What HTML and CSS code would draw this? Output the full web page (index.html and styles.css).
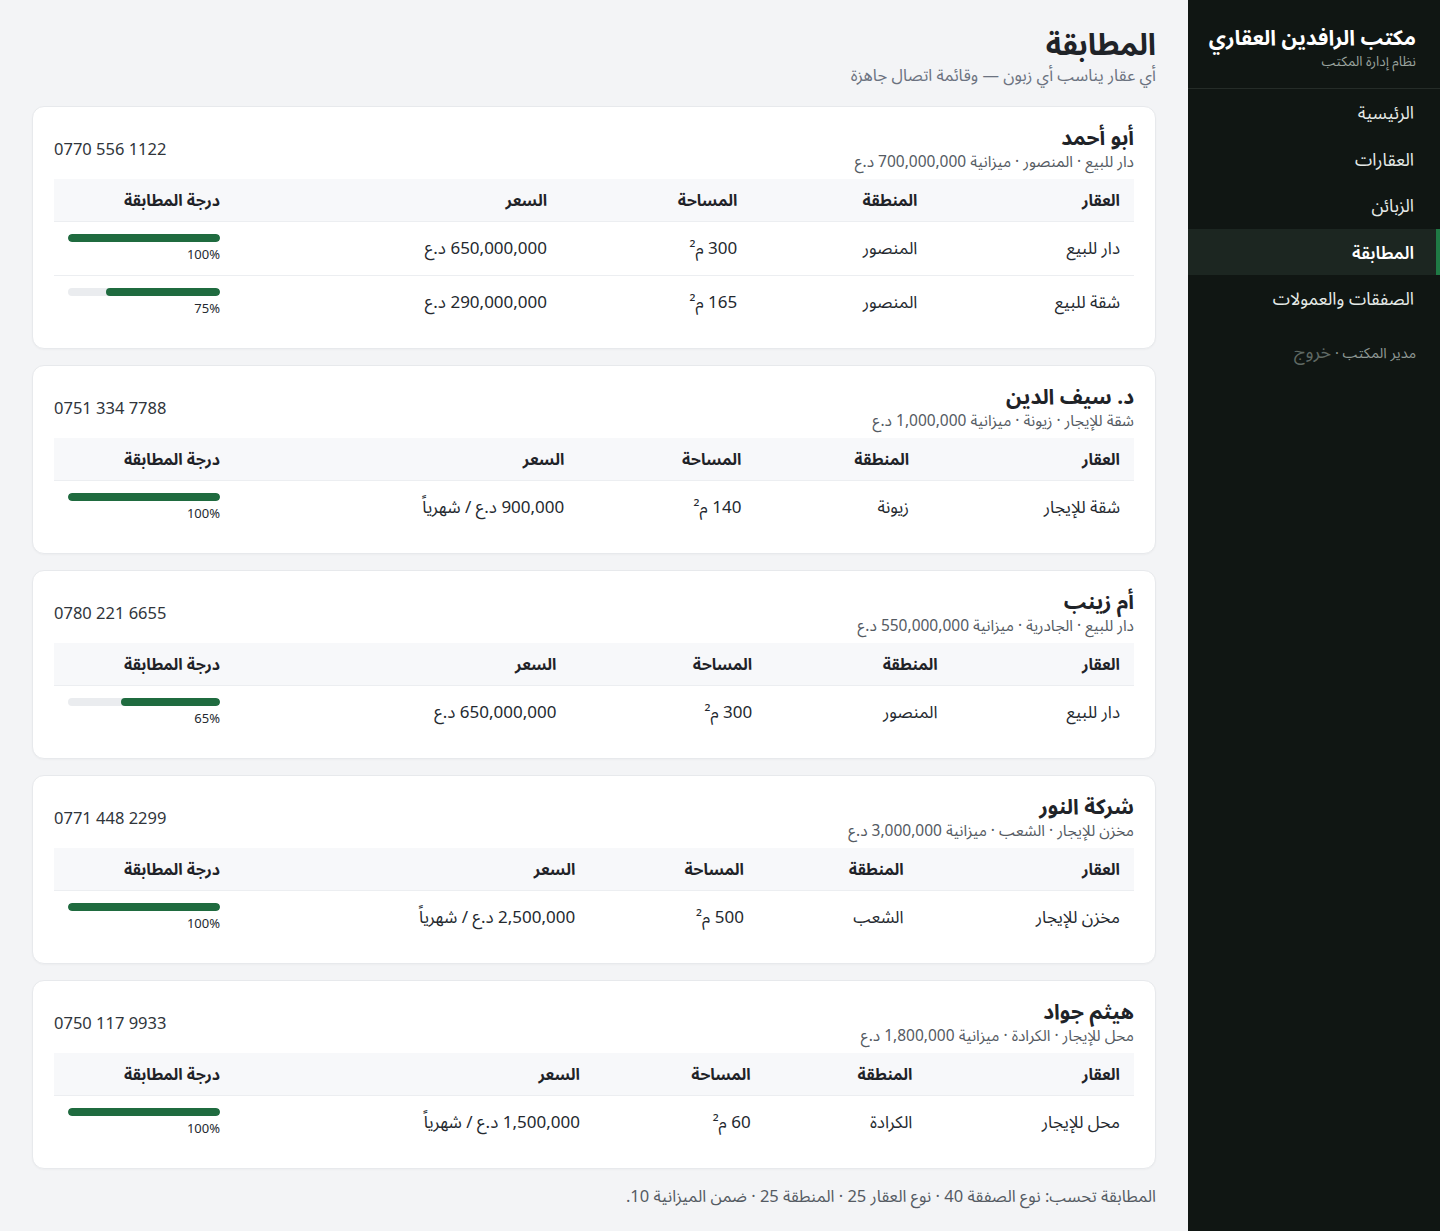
FILE: index.html
```html
<!DOCTYPE html>
<html lang="ar" dir="rtl">
<head>
    <meta charset="UTF-8">
    <meta name="viewport" content="width=device-width, initial-scale=1.0">
    <title>المطابقة</title>
    <link rel="stylesheet" href="styles.css">
</head>
<body>
    <div class="layout">
        <aside class="sidebar">
            <div class="brand">
                <div class="brand-name">مكتب الرافدين العقاري</div>
                <div class="brand-sub">نظام إدارة المكتب</div>
            </div>
            <nav class="nav">
                <a class="nav-item">الرئيسية</a>
                <a class="nav-item">العقارات</a>
                <a class="nav-item">الزبائن</a>
                <a class="nav-item active">المطابقة</a>
                <a class="nav-item">الصفقات والعمولات</a>
            </nav>
            <div class="user">مدير المكتب · <span class="logout">خروج</span></div>
        </aside>

        <main class="main">
            <div class="page-head">
                <h1>المطابقة</h1>
                <div class="page-sub">أي عقار يناسب أي زبون — وقائمة اتصال جاهزة</div>
            </div>

            <div class="card">
                <div class="card-head">
                    <div>
                        <div class="client">أبو أحمد</div>
                        <div class="client-sub">دار للبيع · المنصور · ميزانية 700,000,000 د.ع</div>
                    </div>
                    <div class="phone">0770 556 1122</div>
                </div>
                <table class="matches">
                    <thead>
                        <tr><th>العقار</th><th>المنطقة</th><th>المساحة</th><th>السعر</th><th>درجة المطابقة</th></tr>
                    </thead>
                    <tbody>
                        <tr>
                            <td>دار للبيع</td><td>المنصور</td><td>300 م²</td><td>650,000,000 د.ع</td>
                            <td class="score"><div class="bar"><div class="fill" style="width: 100%"></div></div><div class="pct">100%</div></td>
                        </tr>
                        <tr>
                            <td>شقة للبيع</td><td>المنصور</td><td>165 م²</td><td>290,000,000 د.ع</td>
                            <td class="score"><div class="bar"><div class="fill" style="width: 75%"></div></div><div class="pct">75%</div></td>
                        </tr>
                    </tbody>
                </table>
            </div>

            <div class="card">
                <div class="card-head">
                    <div>
                        <div class="client">د. سيف الدين</div>
                        <div class="client-sub">شقة للإيجار · زيونة · ميزانية 1,000,000 د.ع</div>
                    </div>
                    <div class="phone">0751 334 7788</div>
                </div>
                <table class="matches">
                    <thead>
                        <tr><th>العقار</th><th>المنطقة</th><th>المساحة</th><th>السعر</th><th>درجة المطابقة</th></tr>
                    </thead>
                    <tbody>
                        <tr>
                            <td>شقة للإيجار</td><td>زيونة</td><td>140 م²</td><td>900,000 د.ع / شهرياً</td>
                            <td class="score"><div class="bar"><div class="fill" style="width: 100%"></div></div><div class="pct">100%</div></td>
                        </tr>
                    </tbody>
                </table>
            </div>

            <div class="card">
                <div class="card-head">
                    <div>
                        <div class="client">أم زينب</div>
                        <div class="client-sub">دار للبيع · الجادرية · ميزانية 550,000,000 د.ع</div>
                    </div>
                    <div class="phone">0780 221 6655</div>
                </div>
                <table class="matches">
                    <thead>
                        <tr><th>العقار</th><th>المنطقة</th><th>المساحة</th><th>السعر</th><th>درجة المطابقة</th></tr>
                    </thead>
                    <tbody>
                        <tr>
                            <td>دار للبيع</td><td>المنصور</td><td>300 م²</td><td>650,000,000 د.ع</td>
                            <td class="score"><div class="bar"><div class="fill" style="width: 65%"></div></div><div class="pct">65%</div></td>
                        </tr>
                    </tbody>
                </table>
            </div>

            <div class="card">
                <div class="card-head">
                    <div>
                        <div class="client">شركة النور</div>
                        <div class="client-sub">مخزن للإيجار · الشعب · ميزانية 3,000,000 د.ع</div>
                    </div>
                    <div class="phone">0771 448 2299</div>
                </div>
                <table class="matches">
                    <thead>
                        <tr><th>العقار</th><th>المنطقة</th><th>المساحة</th><th>السعر</th><th>درجة المطابقة</th></tr>
                    </thead>
                    <tbody>
                        <tr>
                            <td>مخزن للإيجار</td><td>الشعب</td><td>500 م²</td><td>2,500,000 د.ع / شهرياً</td>
                            <td class="score"><div class="bar"><div class="fill" style="width: 100%"></div></div><div class="pct">100%</div></td>
                        </tr>
                    </tbody>
                </table>
            </div>

            <div class="card">
                <div class="card-head">
                    <div>
                        <div class="client">هيثم جواد</div>
                        <div class="client-sub">محل للإيجار · الكرادة · ميزانية 1,800,000 د.ع</div>
                    </div>
                    <div class="phone">0750 117 9933</div>
                </div>
                <table class="matches">
                    <thead>
                        <tr><th>العقار</th><th>المنطقة</th><th>المساحة</th><th>السعر</th><th>درجة المطابقة</th></tr>
                    </thead>
                    <tbody>
                        <tr>
                            <td>محل للإيجار</td><td>الكرادة</td><td>60 م²</td><td>1,500,000 د.ع / شهرياً</td>
                            <td class="score"><div class="bar"><div class="fill" style="width: 100%"></div></div><div class="pct">100%</div></td>
                        </tr>
                    </tbody>
                </table>
            </div>

            <p class="note">المطابقة تحسب: نوع الصفقة 40 · نوع العقار 25 · المنطقة 25 · ضمن الميزانية 10.</p>
        </main>
    </div>
</body>
</html>
```

FILE: styles.css
```css
* {
    box-sizing: border-box;
}

body {
    margin: 0;
    font-family: "Noto Sans", "Noto Sans Arabic", "DejaVu Sans", sans-serif;
    background-color: #f3f4f6;
    color: #1f2328;
}

.layout {
    display: flex;
    min-height: 100vh;
}

/* Sidebar */
.sidebar {
    width: 252px;
    flex-shrink: 0;
    background-color: #101613;
    color: #e8ece9;
}

.brand {
    padding: 22px 24px 18px;
    border-bottom: 1px solid #252c28;
}

.brand-name {
    font-size: 21px;
    font-weight: 700;
    color: #fff;
    line-height: 30px;
    white-space: nowrap;
}

.brand-sub {
    font-size: 13.5px;
    color: #9aa39e;
    line-height: 18px;
}

.nav {
    display: flex;
    flex-direction: column;
}

.nav-item {
    display: block;
    padding: 12px 26px 12px 24px;
    font-size: 17.5px;
    line-height: 22.5px;
    color: #e6ebe8;
    cursor: pointer;
}

.nav-item.active {
    background-color: #1c2621;
    border-right: 4px solid #1f7a45;
    padding-right: 22px;
    font-weight: 600;
    color: #fff;
}

.user {
    padding: 19px 24px;
    font-size: 14.5px;
    line-height: 20px;
    color: #8e9893;
}

.logout {
    font-size: 18px;
    color: #5f6964;
}

/* Main */
.main {
    flex: 1;
    padding: 25px 32px 24px;
}

.page-head {
    margin-bottom: 19px;
}

.page-head h1 {
    margin: 0;
    font-size: 30px;
    font-weight: 700;
    line-height: 38px;
}

.page-sub {
    font-size: 16.5px;
    color: #6b7280;
    line-height: 24px;
}

.card {
    background-color: #fff;
    border: 1px solid #e7e9ec;
    border-radius: 12px;
    box-shadow: 0 1px 2px rgba(0, 0, 0, 0.03);
    padding: 18px 21px 19px;
    margin-bottom: 16px;
}

.card-head {
    display: flex;
    justify-content: space-between;
    align-items: center;
    margin-bottom: 8px;
}

.client {
    font-size: 21px;
    font-weight: 700;
    line-height: 24px;
    margin-bottom: 2px;
}

.client-sub {
    font-size: 15.5px;
    color: #555b63;
    line-height: 20px;
}

.phone {
    direction: ltr;
    font-size: 16.5px;
    color: #30353b;
}

.matches {
    width: 100%;
    border-collapse: collapse;
}

.matches th {
    background-color: #f7f8fa;
    font-size: 16px;
    font-weight: 700;
    text-align: right;
    padding: 0 14px;
    height: 42px;
    line-height: 20px;
    border-bottom: 1px solid #eceef1;
}

.matches td {
    font-size: 17px;
    padding: 0 14px;
    height: 54px;
    line-height: 22px;
    border-bottom: 1px solid #eceef1;
    color: #24292f;
}

.matches tbody tr:last-child td {
    border-bottom: none;
}

.score {
    width: 180px;
}

.bar {
    width: 152px;
    height: 8px;
    border-radius: 4px;
    background-color: #eaecef;
    overflow: hidden;
}

.fill {
    height: 100%;
    border-radius: 4px;
    background-color: #1f6b3f;
}

.pct {
    width: 152px;
    font-size: 13px;
    line-height: 18px;
    margin-top: 3px;
    color: #24292f;
}

.note {
    margin: 0;
    font-size: 16.5px;
    line-height: 22px;
    color: #555b63;
}
```
